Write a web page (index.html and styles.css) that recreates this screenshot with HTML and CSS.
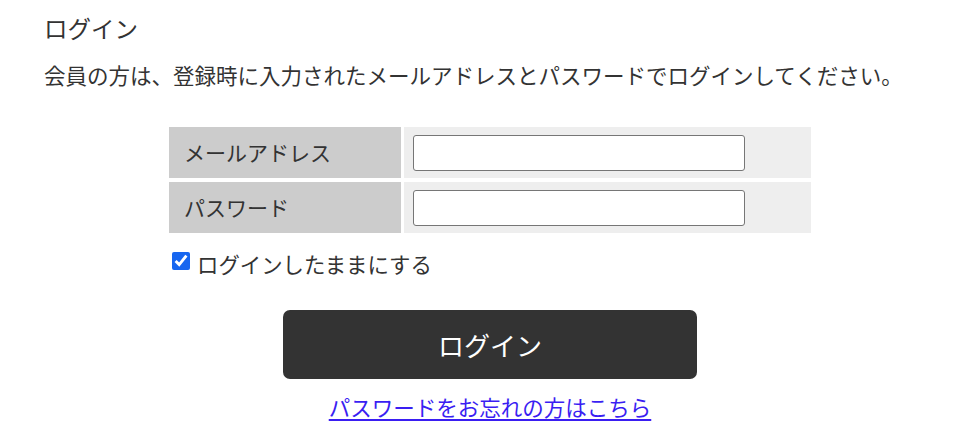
FILE: index.html
```html
<!DOCTYPE html>
<html lang="ja">
<head>
<meta charset="utf-8">
<title>ログイン</title>
<link rel="stylesheet" href="styles.css">
</head>
<body>
<main class="page">
  <h1 class="title">ログイン</h1>
  <p class="lead">会員の方は、登録時に入力されたメールアドレスとパスワードでログインしてください。</p>
  <form class="login-form">
    <div class="fields">
      <div class="label-cell">メールアドレス</div>
      <div class="value-cell"><input class="text-input" type="email"></div>
      <div class="label-cell">パスワード</div>
      <div class="value-cell"><input class="text-input" type="password"></div>
    </div>
    <label class="remember"><input class="check" type="checkbox" checked><span>ログインしたままにする</span></label>
    <button class="submit" type="button">ログイン</button>
    <a class="forgot" href="#">パスワードをお忘れの方はこちら</a>
  </form>
</main>
</body>
</html>
```
FILE: styles.css
```css
* { box-sizing: border-box; }
html, body { margin: 0; padding: 0; background: #fff; }
body {
  font-family: "Noto Sans CJK JP", "Noto Sans", sans-serif;
  color: #333;
}
.page {
  padding: 12px 44px 0;
}
.title {
  margin: 0;
  font-size: 23.5px;
  font-weight: normal;
  line-height: 32px;
  color: #333;
}
.lead {
  margin: 15px 0 0;
  font-size: 21.5px;
  line-height: 32px;
  color: #333;
}
.login-form {
  display: flex;
  flex-direction: column;
  align-items: center;
  margin-top: 36px;
}
.fields {
  display: grid;
  grid-template-columns: 232px 407px;
  grid-auto-rows: 51px;
  column-gap: 3px;
  row-gap: 4px;
}
.label-cell {
  background: #cccccc;
  font-size: 21px;
  line-height: 51px;
  padding-left: 15px;
  color: #333;
}
.value-cell {
  background: #eeeeee;
  display: flex;
  align-items: center;
  padding-left: 9px;
}
.text-input {
  width: 332px;
  height: 36px;
  border: 1px solid #767676;
  border-radius: 3px;
  background: #fff;
  margin: 1px 0 0;
  padding: 0 6px;
  font-size: 18px;
}
.remember {
  width: 642px;
  display: flex;
  align-items: center;
  margin-top: 13px;
  font-size: 21.4px;
  line-height: 36px;
  color: #333;
}
.check {
  width: 18px;
  height: 18px;
  margin: 0 7px 0 3px;
  accent-color: #1766f0;
  position: relative;
  top: -3px;
}
.submit {
  margin-top: 28px;
  width: 414px;
  height: 69px;
  border: none;
  border-radius: 7px;
  background: #333333;
  color: #fff;
  font-family: "Noto Sans CJK JP", "Noto Sans", sans-serif;
  font-size: 26px;
  line-height: 1;
  padding: 0;
}
.forgot {
  margin-top: 13px;
  font-size: 21.5px;
  line-height: 30px;
  color: #3a1ef2;
  text-decoration: underline;
  text-underline-offset: 3px;
}
```
